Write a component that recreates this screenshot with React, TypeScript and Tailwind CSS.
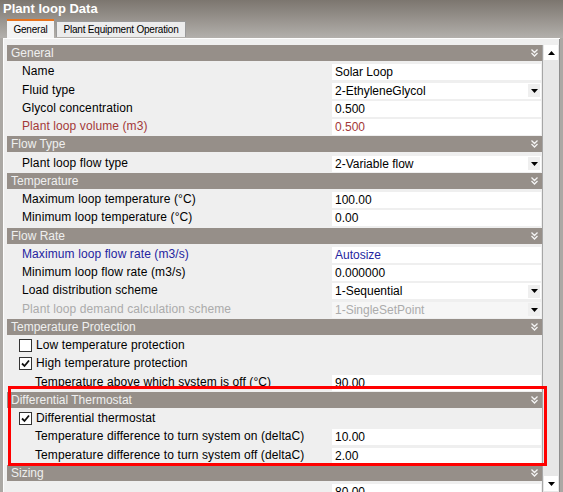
import React from 'react';

type Item =
  | { kind: 'header'; title: string }
  | {
      kind: 'row';
      label: string;
      value?: string;
      dropdown?: boolean;
      tone?: 'normal' | 'red' | 'blue' | 'disabled';
      check?: boolean;
      indent?: boolean;
    };

const items: Item[] = [
  { kind: 'header', title: 'General' },
  { kind: 'row', label: 'Name', value: 'Solar Loop' },
  { kind: 'row', label: 'Fluid type', value: '2-EthyleneGlycol', dropdown: true },
  { kind: 'row', label: 'Glycol concentration', value: '0.500' },
  { kind: 'row', label: 'Plant loop volume (m3)', value: '0.500', tone: 'red' },
  { kind: 'header', title: 'Flow Type' },
  { kind: 'row', label: 'Plant loop flow type', value: '2-Variable flow', dropdown: true },
  { kind: 'header', title: 'Temperature' },
  { kind: 'row', label: 'Maximum loop temperature (°C)', value: '100.00' },
  { kind: 'row', label: 'Minimum loop temperature (°C)', value: '0.00' },
  { kind: 'header', title: 'Flow Rate' },
  { kind: 'row', label: 'Maximum loop flow rate (m3/s)', value: 'Autosize', tone: 'blue' },
  { kind: 'row', label: 'Minimum loop flow rate (m3/s)', value: '0.000000' },
  { kind: 'row', label: 'Load distribution scheme', value: '1-Sequential', dropdown: true },
  {
    kind: 'row',
    label: 'Plant loop demand calculation scheme',
    value: '1-SingleSetPoint',
    dropdown: true,
    tone: 'disabled',
  },
  { kind: 'header', title: 'Temperature Protection' },
  { kind: 'row', label: 'Low temperature protection', check: false },
  { kind: 'row', label: 'High temperature protection', check: true },
  { kind: 'row', label: 'Temperature above which system is off (°C)', value: '90.00', indent: true },
  { kind: 'header', title: 'Differential Thermostat' },
  { kind: 'row', label: 'Differential thermostat', check: true },
  { kind: 'row', label: 'Temperature difference to turn system on (deltaC)', value: '10.00', indent: true },
  { kind: 'row', label: 'Temperature difference to turn system off (deltaC)', value: '2.00', indent: true },
  { kind: 'header', title: 'Sizing' },
  { kind: 'row', label: '', value: '80.00' },
];

const toneClass = {
  normal: 'text-black',
  red: 'text-[#a33838]',
  blue: 'text-[#2424a0]',
  disabled: 'text-[#ababab]',
};

function Chevrons() {
  return (
    <svg width="7" height="8" viewBox="0 0 7 8" className="shrink-0">
      <path d="M0.5 0.5 L3.5 3.5 L6.5 0.5 M0.5 4 L3.5 7 L6.5 4" fill="none" stroke="#f4f4f4" strokeWidth="1.3" />
    </svg>
  );
}

function Triangle({ up }: { up?: boolean }) {
  return (
    <svg width="7" height="4" viewBox="0 0 7 4">
      <path d={up ? 'M0 4 L3.5 0 L7 4 Z' : 'M0 0 L7 0 L3.5 4 Z'} fill="#000" />
    </svg>
  );
}

function CheckBox({ checked }: { checked: boolean }) {
  return (
    <div className="w-[13px] h-[13px] border border-[#333] bg-white flex items-center justify-center shrink-0">
      {checked && (
        <svg width="9" height="9" viewBox="0 0 9 9">
          <path d="M1 4.5 L3.5 7 L8 1.5" fill="none" stroke="#111" strokeWidth="1.8" />
        </svg>
      )}
    </div>
  );
}

function Row({ item }: { item: Item }) {
  if (item.kind === 'header') {
    return (
      <div className="h-[18.25px] shrink-0">
        <div className="h-[16px] bg-[#968f89] text-[#efefef] flex items-center justify-between pl-[4px] pr-[4px] leading-none">
          <span>{item.title}</span>
          <Chevrons />
        </div>
      </div>
    );
  }
  const tone = toneClass[item.tone ?? 'normal'];
  return (
    <div className="h-[18.25px] shrink-0 flex items-start">
      <div
        className={`flex-1 h-[16px] flex items-center gap-[4px] leading-none whitespace-nowrap overflow-visible tracking-[0.1px] ${tone} ${
          item.check !== undefined ? 'pl-[12px]' : item.indent ? 'pl-[28px]' : 'pl-[15px]'
        }`}
      >
        {item.check !== undefined && <CheckBox checked={item.check} />}
        <span>{item.label}</span>
      </div>
      {item.value !== undefined && (
        <div
          className={`w-[209px] h-[16px] mr-[1px] mt-[1px] flex items-center pl-[3px] leading-none ${
            item.tone === 'disabled' ? 'bg-[#f6f6f6]' : 'bg-white'
          } ${tone}`}
        >
          <span className="flex-1">{item.value}</span>
          {item.dropdown && (
            <div className="w-[12px] h-[13px] mr-[1px] bg-[#efefef] flex items-center justify-center">
              <Triangle />
            </div>
          )}
        </div>
      )}
    </div>
  );
}

export default function App() {
  return (
    <div
      className="relative w-[563px] h-[492px] overflow-hidden bg-[#aba8a4] flex flex-col text-[12px]"
      style={{ fontFamily: '"Liberation Sans", Arial, sans-serif' }}
    >
      {/* Title + tabs over a grey gradient */}
      <div className="bg-gradient-to-b from-[#7c766f] to-[#b3b0ac] h-[38px] shrink-0 flex flex-col">
        <div className="h-[18px] pl-[3px] text-white font-bold text-[13px] leading-[17px]">Plant loop Data</div>
        <div className="flex-1 flex items-end pl-[7px] gap-[2px] text-[10px] tracking-[-0.2px] whitespace-nowrap">
          <div className="h-[19px] w-[47px] bg-[#f4f4f4] border-t-[2px] border-[#e8731c] flex items-center justify-center text-black">
            General
          </div>
          <div className="h-[16px] w-[130px] mb-[1px] bg-[#ececec] border border-b-0 border-[#9a9a9a] flex items-center justify-center text-black">
            Plant Equipment Operation
          </div>
        </div>
      </div>

      {/* Property grid panel */}
      <div className="flex-1 min-h-0 mx-[3px] border-t border-l border-[#fdfdfd] bg-[#efefef] flex">
        <div className="flex-1 min-w-0 pl-[3px] pt-[6px] flex flex-col overflow-hidden">
          {items.map((item, i) => (
            <Row key={i} item={item} />
          ))}
        </div>
        {/* Scrollbar */}
        <div className="w-[17px] mt-[6px] border-l border-[#a6a6a6] bg-[#e7e7e7] flex flex-col justify-between items-center pb-[1px]">
          <div className="w-[14px] h-[15px] bg-white flex items-center justify-center">
            <Triangle up />
          </div>
          <div className="w-[14px] h-[15px] bg-white flex items-center justify-center">
            <Triangle />
          </div>
        </div>
        <div className="w-[1px] bg-[#8e8e8e]" />
      </div>

      {/* Red highlight frame */}
      <div className="absolute left-[8px] top-[386px] w-[539px] h-[80px] border-[3px] border-[#ff0000] pointer-events-none" />
    </div>
  );
}
